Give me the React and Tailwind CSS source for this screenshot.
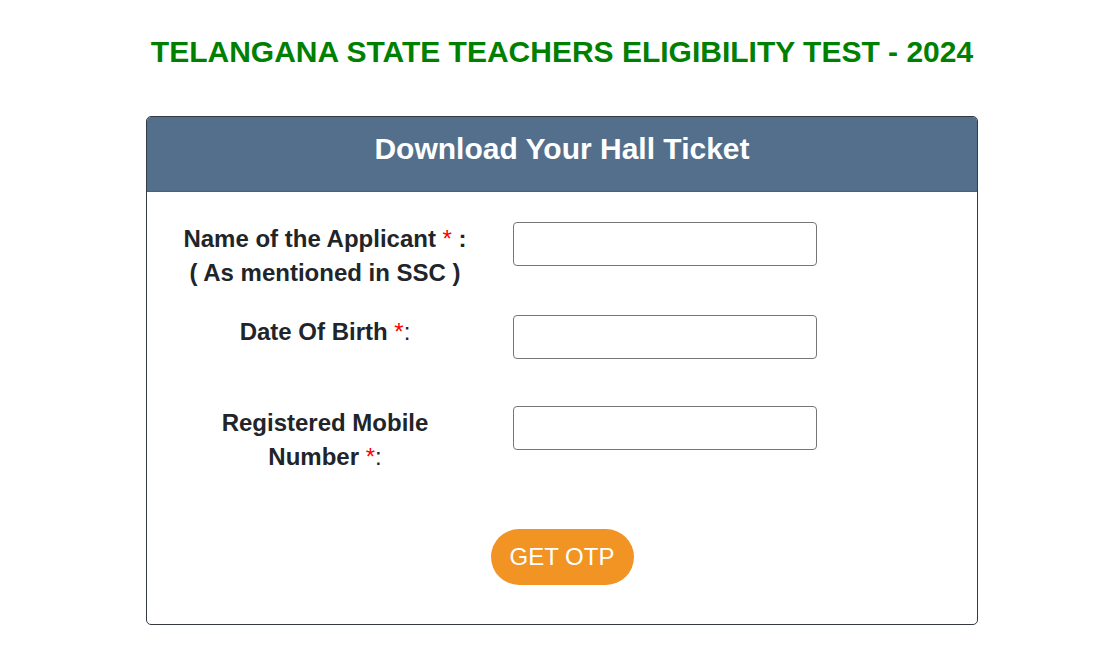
import React from "react";

function Star() {
  return <span className="font-normal text-[#ff0000]">*</span>;
}

function FieldRow({ label, className }) {
  return (
    <div className={`flex items-start ${className || ""}`}>
      <div className="w-[320px] shrink-0 text-center text-[24px] leading-[34px] font-bold text-[#212529]">
        {label}
      </div>
      <input
        type="text"
        className="ml-[28px] h-[44px] w-[304px] rounded-[4px] border border-[#767676] bg-white px-3 text-[16px] outline-none"
      />
    </div>
  );
}

export default function App() {
  return (
    <div className="min-h-screen bg-white pl-[20px] font-['Liberation_Sans',Arial,sans-serif]">
      <h1 className="pt-[34px] text-center text-[30px] leading-[36px] font-bold text-[#008000]">
        TELANGANA STATE TEACHERS ELIGIBILITY TEST - 2024
      </h1>

      <div className="mx-auto mt-[46px] w-[832px] overflow-hidden rounded-[5px] border border-[#343a40] bg-white">
        <div className="border-b border-[#46617c] bg-[#536f8c] pt-[15px] pb-[25px] text-center text-[30px] leading-[34px] font-bold text-white">
          Download Your Hall Ticket
        </div>

        <div className="pt-[30px] pb-[39px] pl-[18px]">
          <FieldRow
            className="mb-[25px]"
            label={
              <>
                Name of the Applicant <Star /> :
                <br />( As mentioned in SSC )
              </>
            }
          />
          <FieldRow
            className="mb-[47px]"
            label={
              <>
                Date Of Birth <Star />
                <span className="font-normal">:</span>
              </>
            }
          />
          <FieldRow
            label={
              <>
                Registered Mobile
                <br />
                Number <Star />
                <span className="font-normal">:</span>
              </>
            }
          />

          <div className="mt-[55px] flex justify-center pr-[18px]">
            <button
              type="button"
              className="h-[56px] w-[143px] rounded-full bg-[#f29423] text-[24px] text-white"
            >
              GET OTP
            </button>
          </div>
        </div>
      </div>
    </div>
  );
}
